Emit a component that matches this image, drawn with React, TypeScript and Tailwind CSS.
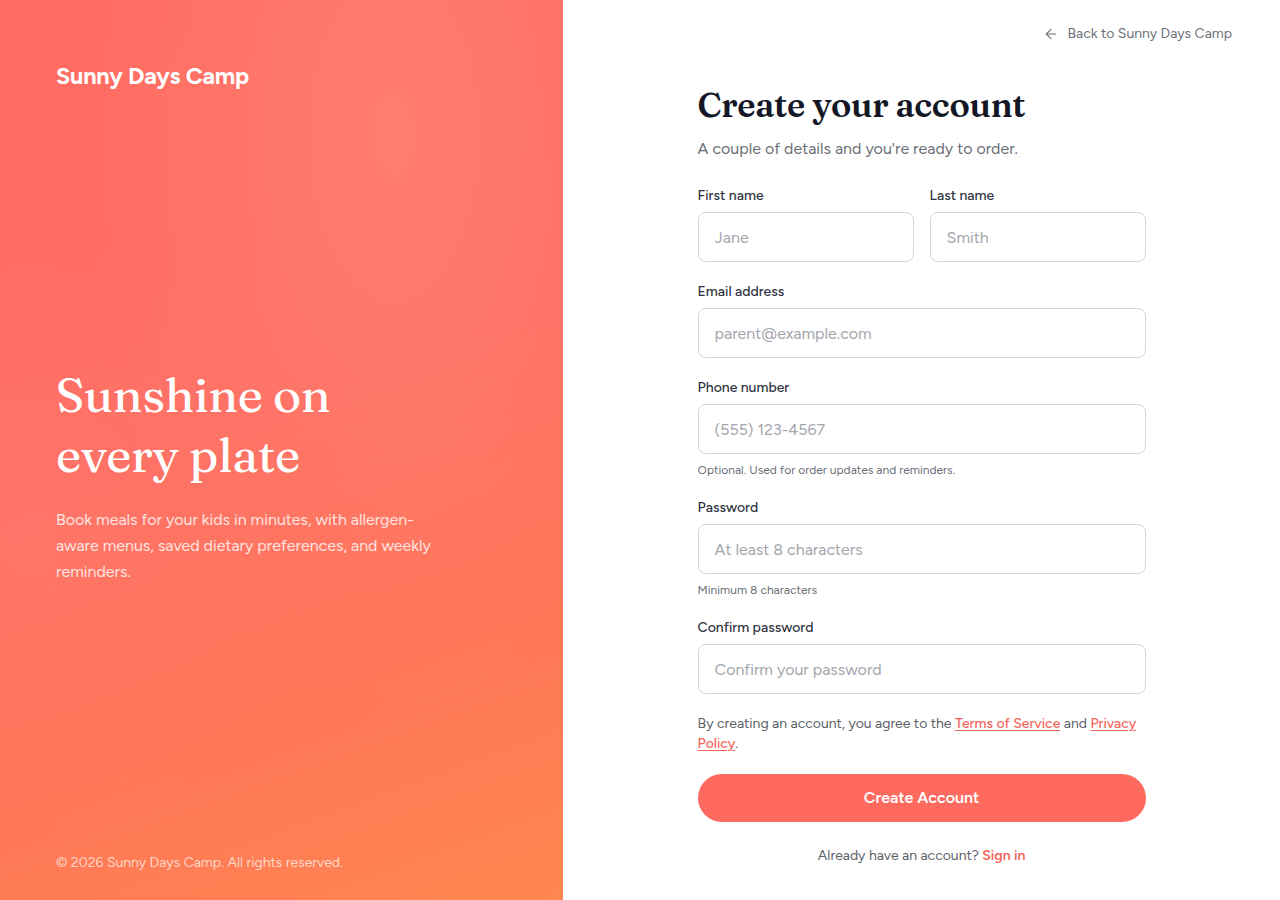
import { ArrowLeft } from 'lucide-react'

const SANS = "font-['Figtree','Lato','Inter',sans-serif]"
const SERIF = "font-['Fraunces','Liberation_Serif',serif]"

function Field({
  label,
  placeholder,
  hint,
  type = 'text',
}: {
  label: string
  placeholder: string
  hint?: string
  type?: string
}) {
  return (
    <div className="flex flex-col">
      <label className="text-sm leading-5 font-medium text-[#2d3340] mb-1.5">{label}</label>
      <input
        type={type}
        placeholder={placeholder}
        className="h-[50px] w-full rounded-lg border border-[#d4d6da] bg-white px-4 text-base text-gray-800 placeholder:text-[#a3a6ad] outline-none"
      />
      {hint && <p className="mt-2 text-xs leading-4 text-[#6b6f78]">{hint}</p>}
    </div>
  )
}

export default function App() {
  return (
    <div className={`flex h-[900px] w-full ${SANS}`}>
      {/* Brand panel */}
      <div className="relative w-[44%] overflow-hidden bg-[linear-gradient(160deg,#ff6c62_0%,#ff6d62_45%,#ff7458_70%,#ff8750_100%)]">
        <div className="pointer-events-none absolute inset-0 bg-[radial-gradient(ellipse_at_70%_15%,rgba(255,150,130,0.4),transparent_55%)]" />
        <div className="pointer-events-none absolute inset-0 bg-[radial-gradient(ellipse_at_5%_60%,rgba(255,140,125,0.25),transparent_40%)]" />
        <div className="relative flex h-full flex-col justify-between px-14 pt-[62px] pb-[27px] text-white">
          <div className="text-[23.5px] font-bold leading-7 tracking-[-0.2px]">Sunny Days Camp</div>
          <div className="mt-[6px]">
            <h1 className={`${SERIF} text-[48px] leading-[60px] font-normal tracking-[-0.4px]`}>
              Sunshine on
              <br />
              every plate
            </h1>
            <p className="mt-[22px] max-w-sm text-base leading-[26px] text-white/80">
              Book meals for your kids in minutes, with allergen-aware menus, saved dietary preferences, and weekly reminders.
            </p>
          </div>
          <div className="text-sm leading-5 text-white/70">© 2026 Sunny Days Camp. All rights reserved.</div>
        </div>
      </div>

      {/* Form panel */}
      <div className="flex flex-1 flex-col bg-white">
        <div className="flex justify-end pt-6 pr-12">
          <a className="flex items-center gap-2 text-sm leading-5 text-[#6b6f78]">
            <ArrowLeft size={16} strokeWidth={1.6} />
            Back to Sunny Days Camp
          </a>
        </div>
        <div className="flex justify-center">
          <div className="w-[448px] pt-[41px]">
            <h2 className={`${SERIF} text-[34px] leading-10 font-semibold text-[#141826] tracking-[-0.3px]`}>
              Create your account
            </h2>
            <p className="mt-3 text-base leading-6 text-[#6b6f78]">
              A couple of details and you're ready to order.
            </p>

            <form className="mt-[25px] flex flex-col gap-5" onSubmit={(e) => e.preventDefault()}>
              <div className="grid grid-cols-2 gap-4">
                <Field label="First name" placeholder="Jane" />
                <Field label="Last name" placeholder="Smith" />
              </div>
              <Field label="Email address" placeholder="parent@example.com" type="email" />
              <Field
                label="Phone number"
                placeholder="(555) 123-4567"
                hint="Optional. Used for order updates and reminders."
              />
              <Field label="Password" placeholder="At least 8 characters" type="password" hint="Minimum 8 characters" />
              <Field label="Confirm password" placeholder="Confirm your password" type="password" />

              <p className="text-sm leading-5 text-[#5b5f68]">
                By creating an account, you agree to the{' '}
                <a className="font-medium text-[#f5655a] underline underline-offset-2">Terms of Service</a> and{' '}
                <a className="font-medium text-[#f5655a] underline underline-offset-2">Privacy Policy</a>.
              </p>

              <button
                type="submit"
                className="h-12 w-full rounded-full bg-[#ff6a5f] text-base font-semibold text-white"
              >
                Create Account
              </button>

              <p className="mt-[4px] text-center text-sm leading-5 text-[#5b5f68]">
                Already have an account? <a className="font-semibold text-[#f5655a]">Sign in</a>
              </p>
            </form>
          </div>
        </div>
      </div>
    </div>
  )
}
